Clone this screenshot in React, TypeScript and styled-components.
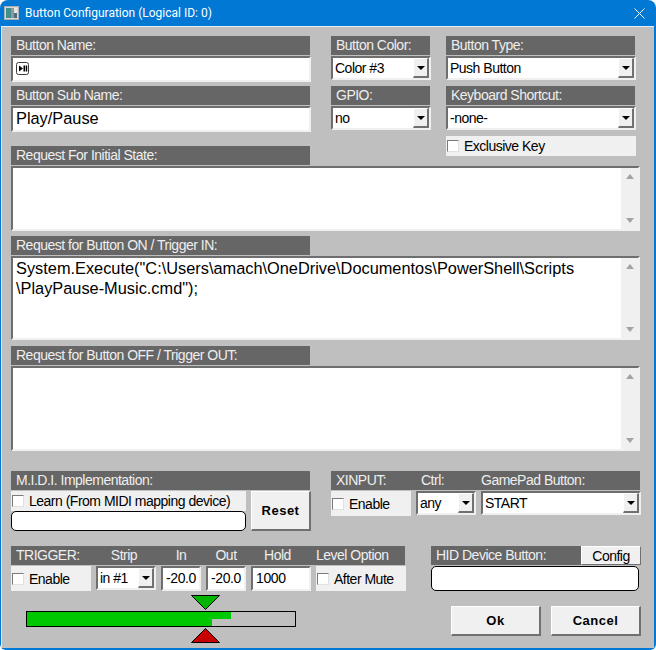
import React from "react";
import styled, { createGlobalStyle } from "styled-components";

const GlobalStyle = createGlobalStyle`
  html, body { margin: 0; padding: 0; background: #ffffff; }
  body { font-family: "Liberation Sans", Arial, sans-serif; }
`;

const FONT = `"Liberation Sans", Arial, sans-serif`;

// Window frame
const Window = styled.div`
  width: 656px;
  height: 650px;
  box-sizing: border-box;
  background: #0078d4;
  border-radius: 8px 8px 6px 6px;
  padding: 0 2px 2px 1px;
  overflow: hidden;
  display: flex;
  flex-direction: column;
`;

const TitleBar = styled.div`
  height: 26px;
  flex: none;
  display: flex;
  align-items: center;
  padding: 0 0 0 3px;
  color: #ffffff;
  font-family: Roboto, sans-serif;
  font-size: 12px;
`;

const TitleText = styled.span`
  margin-left: 6px;
  flex: 1;
`;

const CloseBox = styled.span`
  width: 30px;
  display: flex;
  justify-content: center;
`;

const Body = styled.div`
  flex: 1;
  background: #bfbfbf;
  border-top: 1px solid #e6eef5;
  border-left: 1px solid #dfe6ec;
  padding: 9px 14px 0 9px;
  display: flex;
  flex-direction: column;
  font-family: ${FONT};
  font-size: 14px;
  letter-spacing: -0.5px;
`;

// Layout
const Row = styled.div<{ $mt?: number; $h: number }>`
  display: flex;
  height: ${(p) => p.$h}px;
  margin-top: ${(p) => p.$mt ?? 0}px;
`;

const Column = styled.div<{ $w: number; $ml?: number }>`
  width: ${(p) => p.$w}px;
  margin-left: ${(p) => p.$ml ?? 0}px;
  flex: none;
  display: flex;
  flex-direction: column;
`;

// Dark caption bar
const Caption = styled.div<{ $w?: number; $mt?: number }>`
  height: 19px;
  width: ${(p) => (p.$w ? `${p.$w}px` : "auto")};
  margin-top: ${(p) => p.$mt ?? 0}px;
  margin-bottom: 1px;
  flex: none;
  background: #666666;
  color: #eeeeee;
  line-height: 19px;
  padding-left: 5px;
  box-sizing: border-box;
  white-space: nowrap;
`;

const CaptionRow = styled(Caption)`
  display: flex;
  padding-left: 0;
`;

const CaptionCell = styled.span<{ $w: number; $center?: boolean; $pl?: number }>`
  width: ${(p) => p.$w}px;
  flex: none;
  text-align: ${(p) => (p.$center ? "center" : "left")};
  padding-left: ${(p) => (p.$center ? 0 : p.$pl ?? 5)}px;
  box-sizing: border-box;
`;

// Sunken edit field
const Field = styled.div<{ $h: number; $w?: number; $ml?: number; $large?: boolean }>`
  height: ${(p) => p.$h}px;
  width: ${(p) => (p.$w ? `${p.$w}px` : "auto")};
  margin-left: ${(p) => p.$ml ?? 0}px;
  flex: none;
  box-sizing: border-box;
  background: #ffffff;
  border: 2px solid;
  border-color: #6e6e6e #f0f0f0 #f0f0f0 #6e6e6e;
  color: #000000;
  font-size: ${(p) => (p.$large ? 16.35 : 14)}px;
  letter-spacing: ${(p) => (p.$large ? 0 : -0.4)}px;
  line-height: ${(p) => p.$h - 6}px;
  padding: 0 0 ${(p) => (p.$large ? 2 : 1)}px 3px;
  display: flex;
  align-items: center;
`;

const SelectBox = styled.div<{ $w?: number; $ml?: number }>`
  height: 24px;
  width: ${(p) => (p.$w ? `${p.$w}px` : "auto")};
  margin-left: ${(p) => p.$ml ?? 0}px;
  flex: none;
  box-sizing: border-box;
  background: #ffffff;
  border: 2px solid;
  border-color: #6e6e6e #f0f0f0 #f0f0f0 #6e6e6e;
  display: flex;
  align-items: stretch;
  color: #000000;
`;

const SelectText = styled.span`
  flex: 1;
  padding-left: 2px;
  line-height: 20px;
  white-space: nowrap;
`;

const SelectArrow = styled.span`
  width: 16px;
  box-sizing: border-box;
  background: #f0f0f0;
  border-style: solid;
  border-width: 1px 2px 2px 1px;
  border-color: #ffffff #707070 #707070 #ffffff;
  display: flex;
  align-items: center;
  justify-content: center;

  &::after {
    content: "";
    border-left: 4px solid transparent;
    border-right: 4px solid transparent;
    border-top: 4px solid #000000;
  }
`;

// Check box rows
const CheckRow = styled.div<{ $w: number; $h: number; $ml?: number; $mt?: number }>`
  width: ${(p) => p.$w}px;
  height: ${(p) => p.$h}px;
  margin-left: ${(p) => p.$ml ?? 0}px;
  margin-top: ${(p) => p.$mt ?? 0}px;
  flex: none;
  background: #f0f0f0;
  display: flex;
  align-items: center;
  color: #000000;
  white-space: nowrap;
`;

const Check = styled.span`
  width: 12px;
  height: 12px;
  flex: none;
  box-sizing: border-box;
  background: #ffffff;
  border-top: 1px solid #7a7a7a;
  border-left: 1px solid #7a7a7a;
  border-right: 1px solid #e0e0e0;
  border-bottom: 1px solid #e0e0e0;
  margin: 0 5px 0 1px;
`;

// Multiline request boxes
const ScriptBox = styled.div<{ $h: number; $mb?: number }>`
  height: ${(p) => p.$h}px;
  width: 629px;
  margin-bottom: ${(p) => p.$mb ?? 0}px;
  flex: none;
  box-sizing: border-box;
  background: #ffffff;
  border: 2px solid;
  border-color: #6e6e6e #f0f0f0 #f0f0f0 #6e6e6e;
  display: flex;
`;

const ScriptText = styled.div`
  flex: 1;
  padding: 0 0 0 3px;
  font-size: 16.35px;
  letter-spacing: 0;
  line-height: 20px;
  color: #000000;
  white-space: pre;
`;

const ScrollTrack = styled.div`
  width: 17px;
  flex: none;
  background: #f0f0f0;
  display: flex;
  flex-direction: column;
  justify-content: space-between;
  align-items: center;
  padding: 6px 0;
  box-sizing: border-box;
`;

const ScrollArrow = styled.span<{ $down?: boolean }>`
  border-left: 4px solid transparent;
  border-right: 4px solid transparent;
  border-bottom: ${(p) => (p.$down ? "0" : "5px solid #a3a3a3")};
  border-top: ${(p) => (p.$down ? "5px solid #a3a3a3" : "0")};
`;

// Rounded readouts
const Readout = styled.div<{ $h: number; $w: number }>`
  height: ${(p) => p.$h}px;
  width: ${(p) => p.$w}px;
  flex: none;
  box-sizing: border-box;
  background: #ffffff;
  border: 1px solid #000000;
  border-radius: 5px;
`;

// Raised buttons
const RaisedButton = styled.div<{ $w: number; $h: number; $ml?: number; $mt?: number; $bold?: boolean }>`
  width: ${(p) => p.$w}px;
  height: ${(p) => p.$h}px;
  margin-left: ${(p) => p.$ml ?? 0}px;
  margin-top: ${(p) => p.$mt ?? 0}px;
  flex: none;
  box-sizing: border-box;
  background: #f0f0f0;
  border: 1px solid;
  border-width: ${(p) => (p.$bold ? "1px 2px 2px 1px" : "1px")};
  border-color: #ffffff #707070 #707070 #ffffff;
  color: #000000;
  font-size: ${(p) => (p.$bold ? 13 : 14)}px;
  font-weight: ${(p) => (p.$bold ? 700 : 400)};
  letter-spacing: ${(p) => (p.$bold ? "0.5px" : "-0.5px")};
  display: flex;
  align-items: center;
  justify-content: center;
`;

// Level meter
const MeterBlock = styled.div`
  margin: 4px 0 0 15px;
  width: 270px;
  display: flex;
  flex-direction: column;
`;

const Pointer = styled.svg`
  display: block;
  margin-left: 165px;
  flex: none;
`;

const MeterBar = styled.div`
  height: 16px;
  box-sizing: border-box;
  border: 1px solid #000000;
  background: #bfbfbf;
  margin: 1px 0;
  display: flex;
  flex-direction: column;
`;

const MeterLevel = styled.div`
  height: 7px;
  background: #00c800;
`;

const AppIcon = () => (
  <svg width="15" height="14" viewBox="0 0 15 14">
    <rect x="0.5" y="0.5" width="14" height="13" fill="#d8d8d8" stroke="#a8b0b8" />
    <rect x="2" y="2" width="5" height="10" fill="#3f8f8a" />
    <rect x="7" y="2" width="3" height="10" fill="#8c979e" />
    <rect x="10" y="2" width="3" height="5" fill="#e6e6e6" />
    <rect x="10" y="7" width="3" height="5" fill="#4a6a80" />
  </svg>
);

const CloseIcon = () => (
  <svg width="11" height="11" viewBox="0 0 11 11">
    <path d="M0.5 0.5L10.5 10.5M10.5 0.5L0.5 10.5" stroke="#ffffff" strokeWidth="1" />
  </svg>
);

const PlayPauseGlyph = () => (
  <svg width="13" height="13" viewBox="0 0 13 13">
    <rect x="0.5" y="0.5" width="12" height="12" rx="2" fill="#ffffff" stroke="#3a3a3a" />
    <path d="M3 3.5L7 6.5L3 9.5Z" fill="#000000" />
    <rect x="7.5" y="3.5" width="1.5" height="6" fill="#000000" />
    <rect x="9.7" y="3.5" width="1.5" height="6" fill="#000000" />
  </svg>
);

const Script = ({ h, mb, text }: { h: number; mb?: number; text?: string }) => (
  <ScriptBox $h={h} $mb={mb}>
    <ScriptText>{text}</ScriptText>
    <ScrollTrack>
      <ScrollArrow />
      <ScrollArrow $down />
    </ScrollTrack>
  </ScriptBox>
);

const Select = ({ value, w, ml }: { value: string; w?: number; ml?: number }) => (
  <SelectBox $w={w} $ml={ml}>
    <SelectText>{value}</SelectText>
    <SelectArrow />
  </SelectBox>
);

export default function App() {
  return (
    <>
      <GlobalStyle />
      <Window>
        <TitleBar>
          <AppIcon />
          <TitleText>Button Configuration (Logical ID: 0)</TitleText>
          <CloseBox>
            <CloseIcon />
          </CloseBox>
        </TitleBar>
        <Body>
          {/* Top fields */}
          <Row $h={130}>
            <Column $w={300}>
              <Caption $w={299}>Button Name:</Caption>
              <Field $h={26}>
                <PlayPauseGlyph />
              </Field>
              <Caption $w={299} $mt={4}>Button Sub Name:</Caption>
              <Field $h={26} $large>Play/Pause</Field>
              <Caption $w={299} $mt={14}>Request For Initial State:</Caption>
            </Column>
            <Column $w={100} $ml={20}>
              <Caption $w={99}>Button Color:</Caption>
              <Select value="Color #3" />
              <Caption $w={99} $mt={6}>GPIO:</Caption>
              <Select value="no" />
            </Column>
            <Column $w={190} $ml={15}>
              <Caption $w={189}>Button Type:</Caption>
              <Select value="Push Button" />
              <Caption $w={189} $mt={6}>Keyboard Shortcut:</Caption>
              <Select value="-none-" />
              <CheckRow $w={190} $h={20} $mt={6}>
                <Check />
                Exclusive Key
              </CheckRow>
            </Column>
          </Row>

          {/* Request scripts */}
          <Script h={65} mb={5} />
          <Caption $w={299}>Request for Button ON / Trigger IN:</Caption>
          <Script
            h={84}
            mb={6}
            text={'System.Execute("C:\\Users\\amach\\OneDrive\\Documentos\\PowerShell\\Scripts\n\\PlayPause-Music.cmd");'}
          />
          <Caption $w={299}>Request for Button OFF / Trigger OUT:</Caption>
          <Script h={85} />

          {/* MIDI + XINPUT */}
          <Row $h={60} $mt={20}>
            <Column $w={300}>
              <Caption $w={299}>M.I.D.I. Implementation:</Caption>
              <Row $h={40}>
                <Column $w={235}>
                  <CheckRow $w={235} $h={20}>
                    <Check />
                    Learn (From MIDI mapping device)
                  </CheckRow>
                  <Readout $w={235} $h={20} />
                </Column>
                <RaisedButton $w={60} $h={40} $ml={5} $bold>Reset</RaisedButton>
              </Row>
            </Column>
            <Column $w={310} $ml={20}>
              <CaptionRow $w={309}>
                <CaptionCell $w={85}>XINPUT:</CaptionCell>
                <CaptionCell $w={60}>Ctrl:</CaptionCell>
                <CaptionCell $w={164}>GamePad Button:</CaptionCell>
              </CaptionRow>
              <Row $h={25}>
                <CheckRow $w={80} $h={25}>
                  <Check />
                  Enable
                </CheckRow>
                <Select value="any" w={60} ml={5} />
                <Select value="START" w={160} ml={5} />
              </Row>
            </Column>
          </Row>

          {/* Trigger + HID */}
          <Row $h={100} $mt={15}>
            <Column $w={395}>
              <CaptionRow $w={394}>
                <CaptionCell $w={83}>TRIGGER:</CaptionCell>
                <CaptionCell $w={60} $center>Strip</CaptionCell>
                <CaptionCell $w={54} $center>In</CaptionCell>
                <CaptionCell $w={36} $center>Out</CaptionCell>
                <CaptionCell $w={67} $center>Hold</CaptionCell>
                <CaptionCell $w={94}>Level Option</CaptionCell>
              </CaptionRow>
              <Row $h={25}>
                <CheckRow $w={80} $h={25}>
                  <Check />
                  Enable
                </CheckRow>
                <Select value="in #1" w={60} ml={5} />
                <Field $h={25} $w={40} $ml={5}>-20.0</Field>
                <Field $h={25} $w={40} $ml={5}>-20.0</Field>
                <Field $h={25} $w={60} $ml={5}>1000</Field>
                <CheckRow $w={90} $h={25} $ml={5}>
                  <Check />
                  After Mute
                </CheckRow>
              </Row>
              <MeterBlock>
                <Pointer width="29" height="15" viewBox="0 0 29 15">
                  <path d="M0.5 0.5H28.5L14.5 14.5Z" fill="#00b400" stroke="#000000" />
                </Pointer>
                <MeterBar>
                  <MeterLevel style={{ width: 204 }} />
                  <MeterLevel style={{ width: 185 }} />
                </MeterBar>
                <Pointer width="29" height="15" viewBox="0 0 29 15">
                  <path d="M14.5 0.5L28.5 14.5H0.5Z" fill="#c80000" stroke="#000000" />
                </Pointer>
              </MeterBlock>
            </Column>
            <Column $w={210} $ml={25}>
              <Row $h={20}>
                <Caption $w={150}>HID Device Button:</Caption>
                <RaisedButton $w={60} $h={19}>Config</RaisedButton>
              </Row>
              <Readout $w={208} $h={25} />
              <Row $h={30} $mt={15}>
                <RaisedButton $w={90} $h={30} $ml={20} $bold>Ok</RaisedButton>
                <RaisedButton $w={90} $h={30} $ml={10} $bold>Cancel</RaisedButton>
              </Row>
            </Column>
          </Row>
        </Body>
      </Window>
    </>
  );
}
